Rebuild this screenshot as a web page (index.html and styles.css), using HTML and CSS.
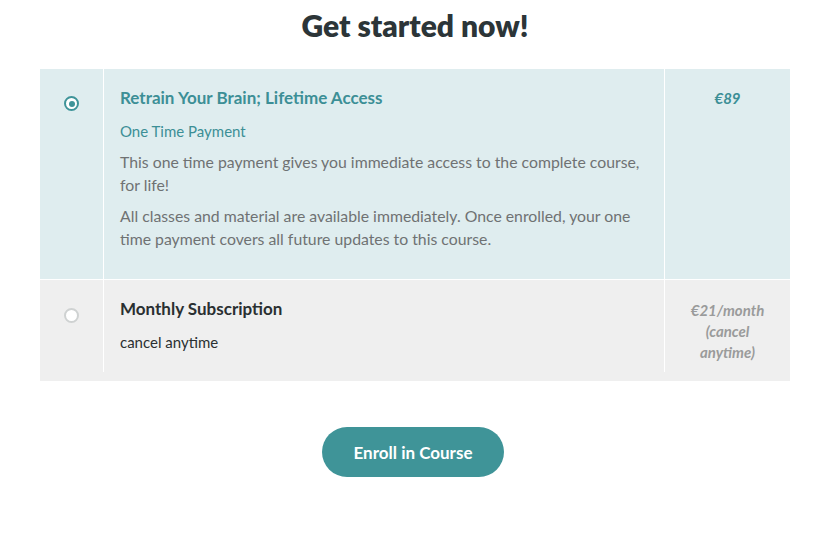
FILE: index.html
```html
<!DOCTYPE html>
<html lang="en">
<head>
<meta charset="utf-8">
<title>Get started now!</title>
<link rel="stylesheet" href="styles.css">
</head>
<body>
<main class="page">
  <h1 class="heading">Get started now!</h1>
  <div class="plans">
    <div class="plan plan-selected">
      <div class="cell cell-radio"><span class="radio radio-on"></span></div>
      <div class="cell cell-info">
        <h2 class="plan-title">Retrain Your Brain; Lifetime Access</h2>
        <p class="plan-sub">One Time Payment</p>
        <p class="plan-text">This one time payment gives you immediate access to the complete course, for life!</p>
        <p class="plan-text">All classes and material are available immediately. Once enrolled, your one time payment covers all future updates to this course.</p>
      </div>
      <div class="cell cell-price"><span class="price">€89</span></div>
    </div>
    <div class="plan plan-other">
      <div class="cell cell-radio"><span class="radio"></span></div>
      <div class="cell cell-info">
        <h2 class="plan-title">Monthly Subscription</h2>
        <p class="plan-sub">cancel anytime</p>
      </div>
      <div class="cell cell-price"><span class="price">€21/month (cancel anytime)</span></div>
    </div>
  </div>
  <div class="actions">
    <button class="enroll" type="button">Enroll in Course</button>
  </div>
</main>
</body>
</html>
```

FILE: styles.css
```css
* { box-sizing: border-box; }
html, body { margin: 0; padding: 0; background: #ffffff; }
body {
  font-family: "Lato", "Open Sans", "Liberation Sans", sans-serif;
  color: #2b3337;
}
.page {
  width: 750px;
  margin-left: 40px;
  padding-top: 4px;
}
.heading {
  margin: 0 0 23px;
  text-align: center;
  font-size: 30px;
  line-height: 42px;
  font-weight: 800;
  color: #2c3538;
}
.plans { display: flex; flex-direction: column; gap: 1px; }
.plan {
  display: grid;
  grid-template-columns: 63px 1fr 125px;
  column-gap: 1px;
}
.plan-selected { background: #dfedef; }
.plan-other { background: #efefef; padding-bottom: 9px; }
.cell-radio, .cell-info { box-shadow: 1px 0 0 #ffffff; }
.cell-radio {
  display: flex;
  justify-content: center;
  padding-top: 27px;
}
.plan-other .cell-radio { padding-top: 28px; }
.radio {
  width: 15px; height: 15px;
  border-radius: 50%;
  border: 2px solid #cfd2d2;
  background: #ffffff;
  position: relative;
}
.radio-on {
  border: 2px solid #3f9499;
  background: #ffffff;
}
.radio-on::after {
  content: "";
  position: absolute;
  left: 2.5px; top: 2.5px;
  width: 6px; height: 6px;
  border-radius: 50%;
  background: #3f9499;
}
.cell-info { padding: 17px 10px 29px 16px; }
.plan-other .cell-info { padding-bottom: 19px; }
.plan-title {
  margin: 0;
  font-size: 17px;
  line-height: 24px;
  font-weight: 700;
  color: #3c8f96;
}
.plan-other .plan-title { color: #2a2f31; }
.plan-sub {
  margin: 10px 0 0;
  font-size: 15px;
  line-height: 22px;
  color: #3c8f96;
}
.plan-other .plan-sub { color: #2a2f31; }
.plan-text {
  margin: 8px 0 0;
  font-size: 15.8px;
  line-height: 23px;
  color: #6f7273;
}
.cell-price {
  text-align: center;
  padding: 19px 14px 0;
}
.plan-other .cell-price { padding-top: 20px; }
.price {
  font-size: 15px;
  line-height: 21px;
  font-weight: 700;
  font-style: italic;
  color: #3c8f96;
}
.plan-other .price { color: #9a9b9b; display: block; padding: 0 8px; }
.actions {
  display: flex;
  justify-content: center;
  padding-top: 46px;
  padding-right: 4px;
}
.enroll {
  width: 182px;
  height: 50px;
  border: none;
  border-radius: 25px;
  background: #3f9498;
  color: #ffffff;
  font-family: inherit;
  font-size: 17px;
  font-weight: 700;
  cursor: pointer;
}
```
